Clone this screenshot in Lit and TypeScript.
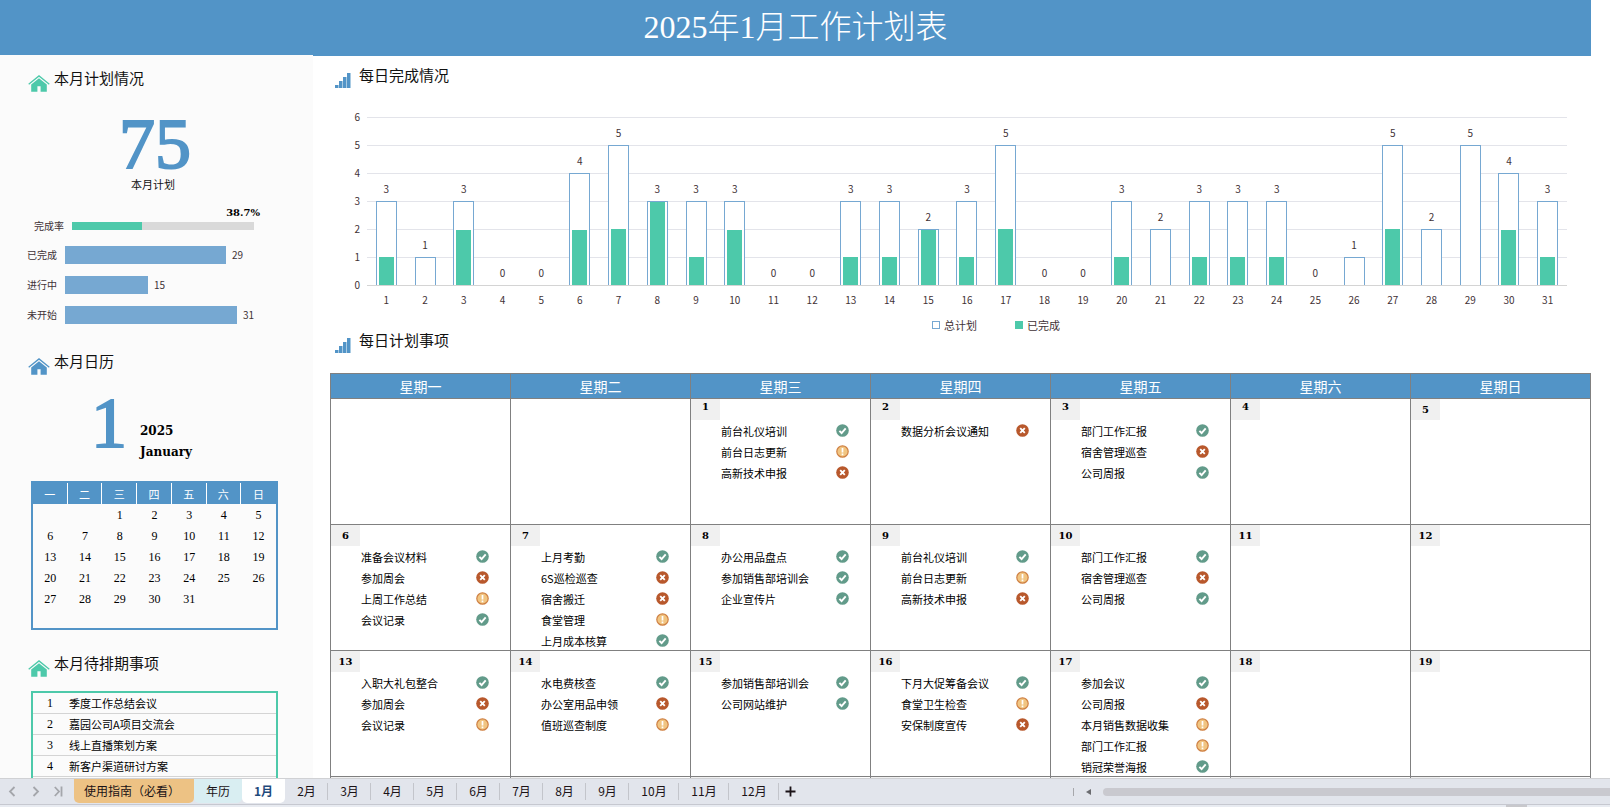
import { LitElement, html, svg, css } from "lit";
import { customElement, property } from "lit/decorators.js";
import { classMap } from "lit/directives/class-map.js";
import { styleMap } from "lit/directives/style-map.js";

type Status = "ok" | "no" | "wait";
type Task = [string, Status];
interface Day {
  n: number | "";
  tasks?: Task[];
  raised?: boolean;
}

const DAILY: [number, number][] = [
  [3, 1], [1, 0], [3, 2], [0, 0], [0, 0], [4, 2], [5, 2], [3, 3], [3, 1], [3, 2],
  [0, 0], [0, 0], [3, 1], [3, 1], [2, 2], [3, 1], [5, 2], [0, 0], [0, 0], [3, 1],
  [2, 0], [3, 1], [3, 1], [3, 1], [0, 0], [1, 0], [5, 2], [2, 0], [5, 0], [4, 2], [3, 1],
];

const TOTALS: [string, number][] = [["已完成", 29], ["进行中", 15], ["未开始", 31]];

const WEEKS: (Day | null)[][] = [
  [
    null,
    null,
    { n: 1, raised: true, tasks: [["前台礼仪培训", "ok"], ["前台日志更新", "wait"], ["高新技术申报", "no"]] },
    { n: 2, raised: true, tasks: [["数据分析会议通知", "no"]] },
    { n: 3, raised: true, tasks: [["部门工作汇报", "ok"], ["宿舍管理巡查", "no"], ["公司周报", "ok"]] },
    { n: 4, raised: true },
    { n: 5 },
  ],
  [
    { n: 6, tasks: [["准备会议材料", "ok"], ["参加周会", "no"], ["上周工作总结", "wait"], ["会议记录", "ok"]] },
    { n: 7, tasks: [["上月考勤", "ok"], ["6S巡检巡查", "no"], ["宿舍搬迁", "no"], ["食堂管理", "wait"], ["上月成本核算", "ok"]] },
    { n: 8, tasks: [["办公用品盘点", "ok"], ["参加销售部培训会", "ok"], ["企业宣传片", "ok"]] },
    { n: 9, tasks: [["前台礼仪培训", "ok"], ["前台日志更新", "wait"], ["高新技术申报", "no"]] },
    { n: 10, tasks: [["部门工作汇报", "ok"], ["宿舍管理巡查", "no"], ["公司周报", "ok"]] },
    { n: 11 },
    { n: 12 },
  ],
  [
    { n: 13, tasks: [["入职大礼包整合", "ok"], ["参加周会", "no"], ["会议记录", "wait"]] },
    { n: 14, tasks: [["水电费核查", "ok"], ["办公室用品申领", "no"], ["值班巡查制度", "wait"]] },
    { n: 15, tasks: [["参加销售部培训会", "ok"], ["公司网站维护", "ok"]] },
    { n: 16, tasks: [["下月大促筹备会议", "ok"], ["食堂卫生检查", "wait"], ["安保制度宣传", "no"]] },
    { n: 17, tasks: [["参加会议", "ok"], ["公司周报", "no"], ["本月销售数据收集", "wait"], ["部门工作汇报", "wait"], ["销冠荣誉海报", "ok"]] },
    { n: 18 },
    { n: 19 },
  ],
  Array.from({ length: 7 }, (): Day => ({ n: "" })),
];

const WEEKDAYS = ["一", "二", "三", "四", "五", "六", "日"];
const BACKLOG = ["季度工作总结会议", "嘉园公司A项目交流会", "线上直播策划方案", "新客户渠道研讨方案", ""];
const MONTHS = Array.from({ length: 12 }, (_, i) => `${i + 1}月`);

const houseIcon = html`<svg class="house" viewBox="0 0 22 17" width="22" height="17" aria-hidden="true">
  <path d="M0.7 9.2 L11 0.9 L21.3 9.2" fill="none" stroke="currentColor" stroke-width="1.3" />
  <path d="M11 3.2 L18.8 9.4 V16.8 H12.6 V11.2 H9.4 V16.8 H3.2 V9.4 Z" fill="currentColor" />
</svg>`;

const barsIcon = html`<svg class="bars" viewBox="0 0 16 15" width="16" height="15" aria-hidden="true">
  <path d="M0 12h3v3H0z M4 8h3v7H4z M8 4h3v11H8z M12 0h3v15h-3z" fill="#5294c7" />
  <path d="M3 12h1v3H3z M7 8h1v7H7z M11 4h1v11h-1z M15 0h1v15h-1z" fill="#a9cbe3" />
</svg>`;

const MARKS = {
  ok: svg`<circle cx="6.500" cy="6.500" r="6.300" fill="#629b8a"/><path d="M3.400 6.800 L5.600 9 L9.700 4.300" fill="none" stroke="#fff" stroke-width="1.900"/>`,
  no: svg`<circle cx="6.500" cy="6.500" r="6.300" fill="#b8582c"/><path d="M4.200 4.200 L8.800 8.800 M8.800 4.200 L4.200 8.800" fill="none" stroke="#fff" stroke-width="1.900"/>`,
  wait: svg`<circle cx="6.500" cy="6.500" r="5.700" fill="#f1c582" stroke="#cf8144" stroke-width="1.200"/><path d="M6.500 3 V7.500 M6.500 8.600 V10.200" fill="none" stroke="#fff" stroke-width="1.700"/>`,
};
const MARK_NAMES = { ok: "已完成", no: "未开始", wait: "进行中" };

@customElement("plan-sidebar")
class PlanSidebar extends LitElement {
  static styles = css`
    :host { display: block; background: #fbfbfb; color: #111; font-size: 11px; }
    h2 { display: flex; align-items: flex-start; gap: 4px; margin: 0; padding-left: 28px; height: 22px; font-size: 15px; font-weight: 400; line-height: 20px; }
    .house { margin-top: 7px; flex: none; }
    .green { color: #4dc9aa; }
    .blue { color: #5294c7; }
    .title { color: #111; }
    .overview { padding-top: 13px; }
    .total { margin-right: 7px; text-align: center; }
    .big { color: #5294c7; font-family: "Liberation Serif", serif; font-size: 72px; line-height: 60px; -webkit-text-stroke: 2px #5294c7; }
    .total .big { margin-top: 24px; padding-left: 4px; }
    .caption { line-height: 18px; margin-top: 1px; }
    .percent { margin: 13px 53px 0 0; text-align: right; font: bold 10px/14px "DejaVu Serif", serif; color: #000; }
    .rate { display: flex; align-items: center; height: 12px; padding: 0 59px 0 34px; font-size: 10px; line-height: 12px; color: #3f3236; }
    .rate label { width: 38px; flex: none; }
    .track { flex: 1; height: 8px; background: #d9d9d9; }
    .fill { height: 100%; background: #4dc9aa; }
    .totals { display: grid; gap: 12px; margin: 14px 0 0; padding: 0 76px 0 27px; font-size: 10px; color: #3f3236; }
    .line { display: flex; align-items: center; height: 18px; line-height: 16px; }
    .line dt { width: 38px; flex: none; }
    .line dd { display: flex; align-items: center; gap: 6px; flex: 1; margin: 0; }
    .meter { height: 18px; flex: none; background: #76a8d2; }
    .month { margin-top: 27px; }
    .date { display: flex; margin-top: 20px; padding-left: 91px; gap: 13px; height: 71px; }
    .words { padding-top: 28px; font: bold 12px/21px "DejaVu Serif", serif; color: #000; }
    .mini { width: calc(100% - 66px); margin: 17px 35px 0 31px; padding-bottom: 19px; box-sizing: border-box; border: 2px solid #5294c7; border-spacing: 0; table-layout: fixed; }
    .mini th, .mini td { height: 21px; padding: 0; text-align: center; line-height: 20px; }
    .mini th { background: #5294c7; color: #fff; font-weight: 400; border-right: 1px solid #fff; line-height: 18px; }
    .mini th:last-child { border-right: 0; }
    .mini td { font-family: "Liberation Serif", serif; font-size: 12px; color: #000; }
    .backlog { margin-top: 23px; }
    .list { margin: 16px 35px 0 31px; padding: 0; border: 2px solid #4dc9aa; list-style: none; color: #000; }
    .list li { display: flex; height: 20px; line-height: 20px; border-bottom: 1px solid #d4d4d4; }
    .list b { width: 36px; box-sizing: border-box; padding-left: 14px; font-family: "Liberation Serif", serif; font-size: 12px; font-weight: 400; }
  `;

  render() {
    const cells = [null, null, ...DAILY.map((_, i) => i + 1), null, null];
    return html`
      <section class="overview">
        <h2><span class="green">${houseIcon}</span><span class="title">本月计划情况</span></h2>
        <div class="total"><div class="big">75</div><div class="caption">本月计划</div></div>
        <div class="percent">38.7%</div>
        <div class="rate"><label id="rate">完成率</label>
          <div class="track" role="progressbar" aria-labelledby="rate" aria-valuenow="38.7"><div class="fill" style=${styleMap({ width: "38.7%" })}></div></div>
        </div>
        <dl class="totals">
          ${TOTALS.map(([name, value]) => html`<div class="line"><dt>${name}</dt><dd>
            <span class="meter" style=${styleMap({ width: `${Math.round((value / 31) * 172)}px` })}></span>${value}</dd></div>`)}
        </dl>
      </section>
      <section class="month">
        <h2><span class="blue">${houseIcon}</span><span class="title">本月日历</span></h2>
        <div class="date"><div class="big">1</div><div class="words">2025<br />January</div></div>
        <table class="mini">
          <thead><tr>${WEEKDAYS.map((d) => html`<th>${d}</th>`)}</tr></thead>
          <tbody>${[0, 1, 2, 3, 4].map((w) => html`<tr>${cells.slice(w * 7, w * 7 + 7).map((n) => html`<td>${n ?? ""}</td>`)}</tr>`)}</tbody>
        </table>
      </section>
      <section class="backlog">
        <h2><span class="green">${houseIcon}</span><span class="title">本月待排期事项</span></h2>
        <ol class="list">${BACKLOG.map((t, i) => html`<li><b>${t ? i + 1 : ""}</b>${t}</li>`)}</ol>
      </section>`;
  }
}

@customElement("daily-chart")
class DailyChart extends LitElement {
  static styles = css`
    :host { display: block; padding-right: 24px; font-size: 10px; line-height: 14px; color: #3f3236; }
    .chart { display: grid; grid-template-columns: 30px 1fr; column-gap: 7px; }
    .axis { display: flex; flex-direction: column; justify-content: space-between; height: 182px; text-align: right; }
    .plot { display: grid; grid-template-columns: repeat(31, 1fr); height: 168px; margin-top: 7px; border-bottom: 1px solid #d4d4d4;
      background: repeating-linear-gradient(to bottom, #e3e4ea 0 1px, transparent 1px 28px); }
    .day { display: flex; flex-direction: column; justify-content: flex-end; align-items: center; gap: 5px; }
    .plan { display: flex; align-items: flex-end; justify-content: center; flex: none; width: 21px; box-sizing: border-box; border: 1px solid #76a8d2; border-bottom: 0; background: #fff; }
    .zero { border: 0; }
    .done { width: 15px; background: #4dc9aa; }
    .days { grid-column: 2; display: grid; grid-template-columns: repeat(31, 1fr); margin-top: 1px; text-align: center; }
    .legend { grid-column: 2; display: flex; justify-content: center; align-items: center; gap: 38px; height: 10px; margin-top: 13px; padding-left: 58px; font-size: 11px; }
    .key { display: flex; align-items: center; gap: 4px; line-height: 10px; }
    .swatch { width: 8px; height: 8px; box-sizing: border-box; border: 1px solid #76a8d2; }
    .solid { background: #4dc9aa; border-color: #4dc9aa; }
  `;

  render() {
    return html`<div class="chart" role="img" aria-label="每日完成情况">
      <div class="axis">${[6, 5, 4, 3, 2, 1, 0].map((n) => html`<span>${n}</span>`)}</div>
      <div class="plot">
        ${DAILY.map(([plan, done]) => html`<div class="day"><span>${plan}</span>
          <div class=${classMap({ plan: true, zero: plan === 0 })} style=${styleMap({ height: `${plan * 28}px` })}>
            <div class="done" style=${styleMap({ height: `${plan ? (done / plan) * 100 : 0}%` })}></div>
          </div></div>`)}
      </div>
      <div class="days">${DAILY.map((_, i) => html`<span>${i + 1}</span>`)}</div>
      <div class="legend">
        <span class="key"><i class="swatch"></i>总计划</span>
        <span class="key"><i class="swatch solid"></i>已完成</span>
      </div>
    </div>`;
  }
}

@customElement("plan-calendar")
class PlanCalendar extends LitElement {
  static styles = css`
    :host { display: block; }
    table { width: 100%; border: solid #808080; border-width: 1px 0 0 1px; border-spacing: 0; table-layout: fixed; }
    th, td { padding: 0; border: solid #808080; border-width: 0 1px 1px 0; }
    th { height: 24px; background: #5294c7; color: #fff; font-size: 14px; font-weight: 400; line-height: 24px; }
    td { height: 125px; vertical-align: top; font-size: 11px; color: #000; }
    .tag { width: 29px; height: 21px; background: #f0f0f0; text-align: center; font: bold 10px/21px "DejaVu Serif", serif; }
    .raised { line-height: 15px; }
    ul { height: 104px; margin: 0; padding: 0 21px 0 30px; list-style: none; }
    li { display: flex; align-items: center; justify-content: space-between; height: 21px; line-height: 20px; white-space: nowrap; }
    svg { flex: none; }
  `;

  render() {
    return html`<table>
      <thead><tr>${WEEKDAYS.map((d) => html`<th>星期${d}</th>`)}</tr></thead>
      <tbody>${WEEKS.map((week) => html`<tr>${week.map((day) => html`<td>${day
        ? html`<div class=${classMap({ tag: true, raised: !!day.raised })}>${day.n}</div>
          <ul>${(day.tasks ?? []).map(([name, s]) => html`<li><span>${name}</span>
            <svg viewBox="0 0 13 13" width="13" height="13" role="img" aria-label=${MARK_NAMES[s]}>${MARKS[s]}</svg></li>`)}</ul>`
        : ""}</td>`)}</tr>`)}</tbody>
    </table>`;
  }
}

@customElement("sheet-tabs")
class SheetTabs extends LitElement {
  @property() current = "1月";

  static styles = css`
    :host { display: block; background: #e2e5ec; border-top: 1px solid #d0d1d4; }
    .bar { display: flex; height: 25px; border-bottom: 1px solid #c6c8d0; }
    .foot { display: flex; justify-content: flex-end; height: 2px; padding-right: 83px; background: #e8ebf1; }
    .grip { width: 21px; background: #c8c8cc; }
    button { flex: none; padding: 0; border: 0; background: none; font: inherit; font-size: 12px; line-height: 22px; color: #1a1216; }
    .nav { display: flex; align-items: center; width: 74px; flex: none; }
    .nav button { display: flex; width: 23px; padding-left: 8px; box-sizing: border-box; }
    .tab { width: 43px; height: 24px; }
    .month { position: relative; }
    .month::after { content: ""; position: absolute; right: 0; top: 4px; height: 17px; border-right: 1px solid #c3c5cb; }
    .wide { width: 50px; }
    .guide { width: 120px; padding-right: 4px; background: #edc284; border-radius: 0 0 5px 5px; }
    .year { width: 48px; background: #d9eef2; border-radius: 0 0 5px 5px; }
    .active { background: #fff; border-radius: 0 0 5px 5px; font-weight: 700; color: #1f4a7c; }
    .active::after { display: none; }
    .add { display: flex; align-items: center; width: 22px; padding-left: 6px; }
    .scroll { display: flex; align-items: center; gap: 12px; flex: 1; margin-left: 272px; min-width: 0; }
    .split { width: 1px; height: 8px; background: #a6a7ab; }
    .thumb { flex: 1; height: 8px; border-radius: 4px 0 0 4px; background: #c9c9cf; }
  `;

  render() {
    const arrow = (d: string, label: string) => html`<button aria-label=${label}>
      <svg viewBox="0 0 11 11" width="11" height="11"><path d=${d} fill="none" stroke="#a4a6ab" stroke-width="1.800" /></svg></button>`;
    return html`
      <nav class="bar">
        <div class="nav">
          ${arrow("M6.500 1 L2 5.500 L6.500 10", "上一张")}
          ${arrow("M2.500 1 L7 5.500 L2.500 10", "下一张")}
          ${arrow("M0.800 1 L5 5.500 L0.800 10 M7.500 0.500 V10.500", "最后一张")}
        </div>
        <button class="tab guide">使用指南（必看）</button>
        <button class="tab year">年历</button>
        ${MONTHS.map((m, i) => html`<button
          class=${classMap({ tab: true, month: true, wide: i > 8, active: m === this.current })}
          @click=${() => (this.current = m)}>${m}</button>`)}
        <button class="add" aria-label="新建工作表"><svg viewBox="0 0 11 11" width="11" height="11"><path d="M5.500 0.500 V10.500 M0.500 5.500 H10.500" stroke="#1a1216" stroke-width="1.800" /></svg></button>
        <div class="scroll">
          <span class="split"></span>
          <svg viewBox="0 0 5 6" width="5" height="6"><path d="M5 0 V6 L0 3 Z" fill="#6b6c70" /></svg>
          <span class="thumb"></span>
        </div>
      </nav>
      <div class="foot"><span class="grip"></span></div>`;
  }
}

@customElement("app-root")
class AppRoot extends LitElement {
  static styles = css`
    :host { display: flex; flex-direction: column; height: 100vh; overflow: hidden; background: #fff; font-family: "Noto Sans CJK SC", sans-serif; color: #111; }
    .sheet { flex: 1; min-height: 0; overflow: hidden; padding-right: 19px; }
    h1 { margin: 0; height: 55px; background: #5294c7; color: #fff; text-align: center; font-family: "Liberation Serif", "Noto Sans CJK SC", serif; font-size: 32px; font-weight: 300; line-height: 55px; }
    .body { display: grid; grid-template-columns: 313px 1fr; }
    main { min-width: 0; padding: 9px 0 0 17px; border-top: 1px solid #5294c7; }
    h2 { display: flex; align-items: flex-start; gap: 8px; height: 22px; margin: 0; padding-left: 5px; font-size: 15px; font-weight: 400; line-height: 20px; }
    .bars { margin-top: 8px; }
    daily-chart { margin-top: 23px; }
    plan-calendar { margin-top: 21px; }
    sheet-tabs { flex: none; }
  `;

  render() {
    return html`
      <div class="sheet">
        <h1>2025年1月工作计划表</h1>
        <div class="body">
          <plan-sidebar></plan-sidebar>
          <main>
            <h2>${barsIcon}每日完成情况</h2>
            <daily-chart></daily-chart>
            <h2>${barsIcon}每日计划事项</h2>
            <plan-calendar></plan-calendar>
          </main>
        </div>
      </div>
      <sheet-tabs></sheet-tabs>`;
  }
}
